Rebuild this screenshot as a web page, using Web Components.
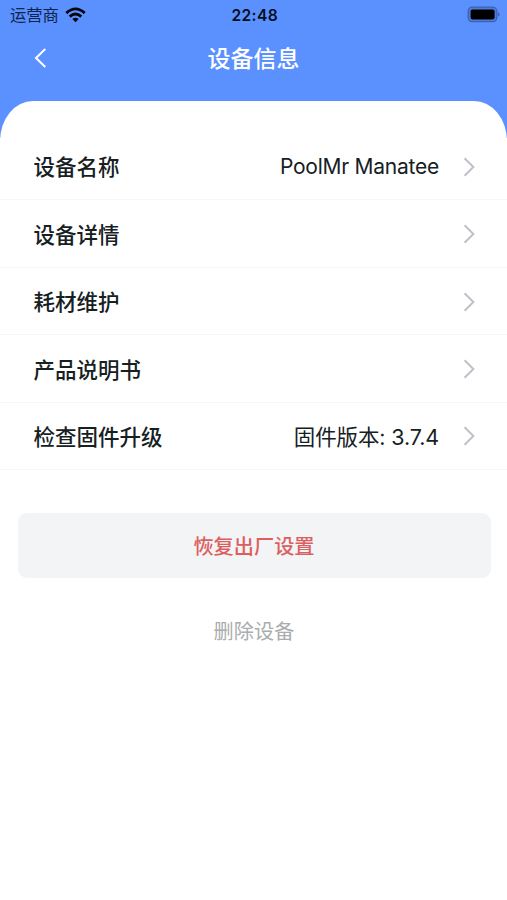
<!DOCTYPE html>
<html lang="zh-CN">
<head>
<meta charset="utf-8">
<meta name="viewport" content="width=device-width">
<title>设备信息</title>
<style>
html,body{margin:0;height:100%;background:#fff;overflow:hidden}
body{font-family:Inter,"Noto Sans CJK SC",sans-serif;color:#16211f}
</style>
</head>
<body>
<device-page>
  <status-bar slot="top" carrier="运营商" time="22:48"></status-bar>
  <nav-bar slot="top">设备信息</nav-bar>
  <info-row label="设备名称" latin>PoolMr Manatee</info-row>
  <info-row label="设备详情"></info-row>
  <info-row label="耗材维护"></info-row>
  <info-row label="产品说明书"></info-row>
  <info-row label="检查固件升级">固件版本: 3.7.4</info-row>
  <action-button slot="actions" kind="reset">恢复出厂设置</action-button>
  <action-button slot="actions" kind="plain">删除设备</action-button>
</device-page>
<script>
function define(name, html) {
  customElements.define(name, class extends HTMLElement {
    constructor() {
      super();
      this.attachShadow({mode: 'open'}).innerHTML = html;
    }
    connectedCallback() {
      this.shadowRoot.querySelectorAll('[data-attr]').forEach(el => {
        el.textContent = this.getAttribute(el.dataset.attr) || '';
      });
    }
  });
}

define('device-page', `
<style>
:host{display:flex;flex-direction:column;height:100vh;background:linear-gradient(#5b91ff 0 138px,#fff 138px)}
header{height:100.5px;flex:none}
main{flex:1;background:#fff;border-radius:33px 33px 0 0 / 40px 40px 0 0;padding-top:32.5px}
.actions{padding:43px 16.5px 0 17.5px}
</style>
<header><slot name="top"></slot></header>
<main><slot></slot><div class="actions"><slot name="actions"></slot></div></main>`);

define('status-bar', `
<style>
:host{display:grid;grid-template-columns:1fr auto 1fr;align-items:center;height:29px;padding:0 7.5px 0 10px;box-sizing:border-box;color:#10234c}
.left{display:flex;align-items:center;gap:6px;font-size:16.3px}
.left span{line-height:27px;padding-top:2px}
.time{font-size:15.6px;font-weight:600;letter-spacing:.35px;line-height:27px;padding-top:2px;color:#050e22}
.battery{justify-self:end}
svg{display:block}
</style>
<div class="left"><span data-attr="carrier"></span>
<svg width="21" height="16" viewBox="0 0 21 16"><g fill="none" stroke="#02060e" stroke-width="2.8"><path d="M1.3 6.1Q10.5-2.3 19.7 6.1"/><path d="M4.7 9.6Q10.5 4.3 16.3 9.6"/></g><path d="M7.4 12.1Q10.5 9.5 13.6 12.1L10.5 15.2Z" fill="#02060e"/></svg></div>
<span class="time" data-attr="time"></span>
<svg class="battery" width="33" height="17" viewBox="0 0 33 17"><rect x="1.2" y="1.2" width="28.6" height="14.4" rx="4" fill="#4c7bdb" stroke="#3c62ae" stroke-width="1.3"/><rect x="3.6" y="3.4" width="24" height="10" rx="1.8" fill="#000"/><path d="M31 6.3Q32.6 6.8 32.6 8.4T31 10.5Z" fill="#3c62ae"/></svg>`);

define('nav-bar', `
<style>
:host{display:grid;grid-template-columns:60px 1fr 60px;align-items:center;height:57px;color:#fff}
svg{display:block;margin-left:33px}
.title{text-align:center;font-size:23px;font-weight:500;line-height:54px;padding-top:3px}
</style>
<svg width="16" height="22" viewBox="0 0 16 22"><path d="M12.3 2L3 11L12.3 20" fill="none" stroke="#fff" stroke-width="2"/></svg>
<span class="title"><slot></slot></span>`);

define('info-row', `
<style>
:host{display:flex;align-items:center;height:67.45px;box-sizing:border-box;padding:0 29px 0 33.5px;border-bottom:1px solid #f7f7f8}
.label{font-size:21.5px;font-weight:500;line-height:32px;padding-top:2px}
.value{margin-left:auto;margin-right:22px;font-size:21.5px;line-height:32px;padding-top:2px;letter-spacing:-.12px;white-space:nowrap}
:host([latin]) .value{font-size:21px;letter-spacing:-.24px}
svg{display:block;flex:none;margin-top:1px}
</style>
<span class="label" data-attr="label"></span><span class="value"><slot></slot></span>
<svg width="17" height="22" viewBox="0 0 17 22"><path d="M3.6 2.2L12.4 11L3.6 19.8" fill="none" stroke="#bfc0c8" stroke-width="2"/></svg>`);

define('action-button', `
<style>
:host{display:block;text-align:center}
button{display:block;width:100%;border:0;padding:3px 0 0;margin:0;box-sizing:border-box;font:inherit;font-size:20.2px;line-height:30px;background:none;color:#aaadad}
:host([kind=reset]) button{height:65px;border-radius:9px;background:#f2f4f6;color:#dc5f60;font-weight:500}
:host([kind=plain]) button{height:44px;margin-top:30px}
</style>
<button><slot></slot></button>`);
</script>
</body>
</html>
